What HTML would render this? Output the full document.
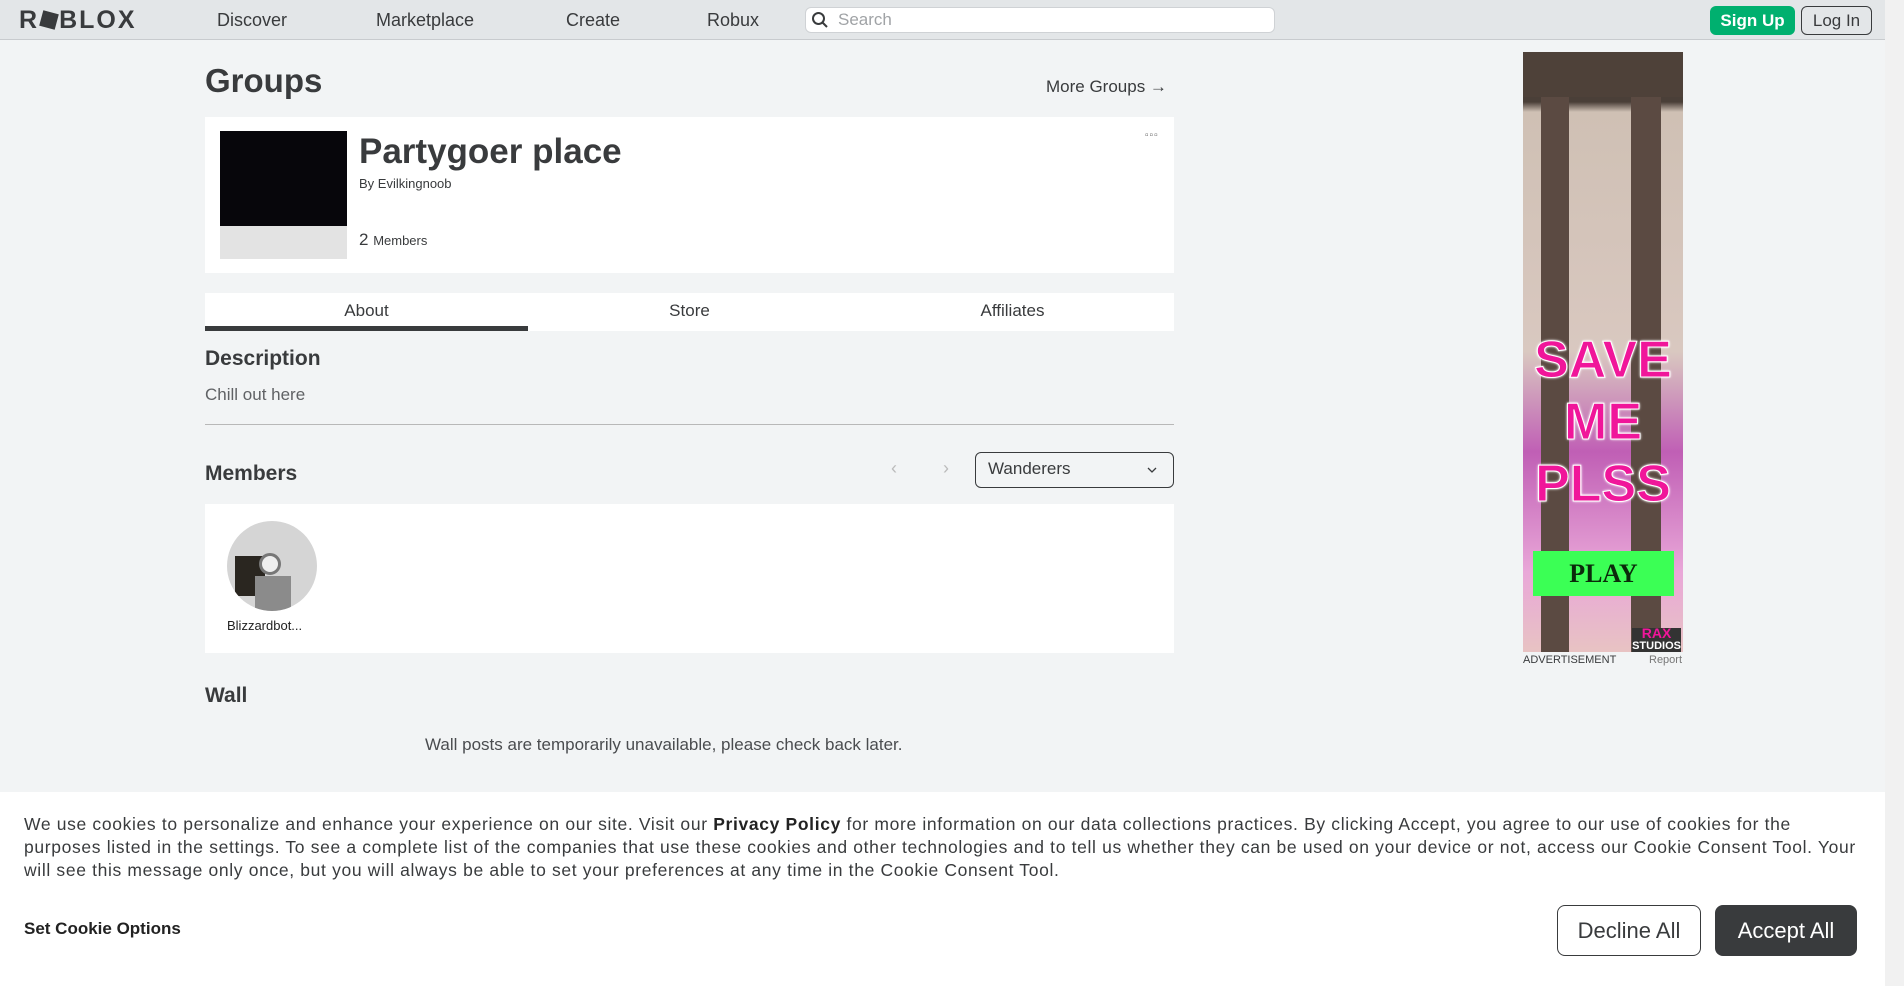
<!DOCTYPE html>
<html><head><meta charset="utf-8"><style>
*{box-sizing:border-box;margin:0;padding:0}
body{width:1904px;height:986px;overflow:hidden;background:#f2f4f5;font-family:"Liberation Sans",sans-serif;color:#393b3d;position:relative}
.a{position:absolute;white-space:nowrap}
.nav{position:absolute;left:0;top:0;width:1885px;height:40px;background:#e3e6e8;border-bottom:1px solid #c8cbce}
.navl{font-size:18px;color:#393b3d;top:10px}
.sb{position:absolute;right:0;top:0;width:19px;height:986px;background:#f1f1f1}
.card{position:absolute;background:#fff}
.btn{position:absolute;border-radius:8px;font-size:22px;text-align:center}
</style></head><body>
<div class="nav"></div>
<div class="a" style="left:19px;top:6px;font-size:25px;font-weight:bold;letter-spacing:2px;color:#393b3d">R<span style="display:inline-block;width:16px;height:16px;background:#393b3d;transform:rotate(15deg);margin:0 2px"></span>BLOX</div>
<div class="a navl" style="left:217px">Discover</div>
<div class="a navl" style="left:376px">Marketplace</div>
<div class="a navl" style="left:566px">Create</div>
<div class="a navl" style="left:707px">Robux</div>
<div class="a" style="left:805px;top:7px;width:470px;height:26px;background:#fff;border-radius:6px;border:1px solid #cfd2d5"></div>
<svg class="a" style="left:811px;top:11px" width="18" height="18" viewBox="0 0 18 18"><circle cx="7.5" cy="7.5" r="5.5" fill="none" stroke="#393b3d" stroke-width="2"/><path d="M11.5 11.5L16 16" stroke="#393b3d" stroke-width="2"/></svg>
<div class="a" style="left:838px;top:10px;font-size:17px;color:#a0a3a6">Search</div>
<div class="a" style="left:1710px;top:6px;width:85px;height:29px;background:#00b06f;border-radius:6px;color:#fff;font-weight:bold;font-size:17px;text-align:center;line-height:29px">Sign Up</div>
<div class="a" style="left:1801px;top:6px;width:71px;height:29px;border:1px solid #393b3d;border-radius:6px;font-size:17px;text-align:center;line-height:27px">Log In</div>
<div class="sb"></div>

<div class="a" style="left:205px;top:62px;font-size:33px;font-weight:bold">Groups</div>
<div class="a" style="left:1046px;top:77px;font-size:17px">More Groups →</div>
<div class="card" style="left:205px;top:117px;width:969px;height:156px"></div>
<div class="a" style="left:220px;top:131px;width:127px;height:95px;background:#07060b"></div>
<div class="a" style="left:220px;top:226px;width:127px;height:33px;background:#e3e3e3"></div>
<div class="a" style="left:359px;top:132px;font-size:35px;font-weight:bold;color:#393b3d">Partygoer place</div>
<div class="a" style="left:359px;top:176px;font-size:13px">By <span style="color:#393b3d">Evilkingnoob</span></div>
<div class="a" style="left:359px;top:230px;font-size:17px">2 <span style="font-size:13px">Members</span></div>
<div class="a" style="left:1145px;top:130px;font-size:10px;letter-spacing:1px;color:#666">▫▫▫</div>

<div class="card" style="left:205px;top:293px;width:969px;height:38px"></div>
<div class="a" style="left:205px;top:326px;width:323px;height:5px;background:#393b3d"></div>
<div class="a" style="left:205px;top:301px;width:323px;text-align:center;font-size:17px">About</div>
<div class="a" style="left:528px;top:301px;width:323px;text-align:center;font-size:17px">Store</div>
<div class="a" style="left:851px;top:301px;width:323px;text-align:center;font-size:17px">Affiliates</div>

<div class="a" style="left:205px;top:347px;font-size:21px;font-weight:bold">Description</div>
<div class="a" style="left:205px;top:385px;font-size:17px;color:#606265">Chill out here</div>
<div class="a" style="left:205px;top:424px;width:969px;height:1px;background:#b8b8b8"></div>
<div class="a" style="left:205px;top:462px;font-size:21px;font-weight:bold">Members</div>
<div class="a" style="left:891px;top:458px;font-size:18px;color:#bbb">‹</div>
<div class="a" style="left:943px;top:458px;font-size:18px;color:#bbb">›</div>
<div class="a" style="left:975px;top:452px;width:199px;height:36px;border:1px solid #393b3d;border-radius:6px"></div>
<div class="a" style="left:988px;top:459px;font-size:17px">Wanderers</div>
<svg class="a" style="left:1146px;top:465px" width="12" height="10"><path d="M2 3l4 4 4-4" fill="none" stroke="#393b3d" stroke-width="1.3"/></svg>
<div class="card" style="left:205px;top:504px;width:969px;height:149px"></div>
<div class="a" style="left:227px;top:521px;width:90px;height:90px;border-radius:50%;background:#d5d5d5;overflow:hidden">
<div style="position:absolute;left:8px;top:35px;width:30px;height:40px;background:#2a2620"></div>
<div style="position:absolute;left:32px;top:32px;width:22px;height:22px;border-radius:50%;background:#eee;border:3px solid #777"></div>
<div style="position:absolute;left:28px;top:55px;width:36px;height:35px;background:#8b8b8b"></div>
</div>
<div class="a" style="left:227px;top:618px;font-size:13px;color:#222">Blizzardbot...</div>
<div class="a" style="left:205px;top:684px;font-size:21px;font-weight:bold">Wall</div>
<div class="a" style="left:425px;top:735px;font-size:17px;color:#4a4c4f">Wall posts are temporarily unavailable, please check back later.</div>

<div class="a" style="left:1523px;top:52px;width:160px;height:600px;overflow:hidden;background:linear-gradient(#4a3f38 0,#4a3f38 50px,#cfc0b4 60px,#d9c8c0 300px,#c05fb5 400px,#e9a7d8 520px,#e8c3c3 600px)">
<div style="position:absolute;left:18px;top:40px;width:28px;height:560px;background:#5b4a42"></div>
<div style="position:absolute;left:108px;top:35px;width:30px;height:565px;background:#5b4a42"></div>
<div style="position:absolute;left:0;top:0;width:160px;height:45px;background:#4e4139"></div>
<div style="position:absolute;left:0;top:277px;width:160px;text-align:center;font-size:52px;font-weight:900;color:#f0169a;line-height:62px;-webkit-text-stroke:1px #fff;text-shadow:0 0 3px #fff,0 0 2px #fff">SAVE<br>ME<br>PLSS</div>
<div style="position:absolute;left:10px;top:499px;width:141px;height:45px;background:#3bff55;text-align:center;font-family:'Liberation Serif',serif;font-weight:bold;font-size:26px;line-height:45px;color:#0b2b0b">PLAY</div>
<div style="position:absolute;right:2px;bottom:0;font-size:11px;font-weight:bold;color:#fff;text-align:center;line-height:11px;background:#333"><span style="color:#f0169a;font-size:14px">RAX</span><br>STUDIOS</div>
</div>
<div class="a" style="left:1523px;top:654px;font-size:11px;color:#393b3d">ADVERTISEMENT</div>
<div class="a" style="left:1649px;top:654px;font-size:11px;color:#777">Report</div>

<div class="a" style="left:0;top:792px;width:1885px;height:194px;background:#fff"></div>
<div class="a" style="left:24px;top:813px;font-size:17.5px;line-height:23px;letter-spacing:0.65px;color:#393b3d">We use cookies to personalize and enhance your experience on our site. Visit our <b style="color:#222">Privacy Policy</b> for more information on our data collections practices. By clicking Accept, you agree to our use of cookies for the<br>purposes listed in the settings. To see a complete list of the companies that use these cookies and other technologies and to tell us whether they can be used on your device or not, access our Cookie Consent Tool. Your<br>will see this message only once, but you will always be able to set your preferences at any time in the Cookie Consent Tool.</div>
<div class="a" style="left:24px;top:919px;font-size:17px;font-weight:bold;color:#222">Set Cookie Options</div>
<div class="btn" style="left:1557px;top:905px;width:144px;height:51px;border:1px solid #393b3d;line-height:49px;color:#393b3d">Decline All</div>
<div class="btn" style="left:1715px;top:905px;width:142px;height:51px;background:#393b3d;color:#fff;line-height:51px">Accept All</div>
</body></html>
